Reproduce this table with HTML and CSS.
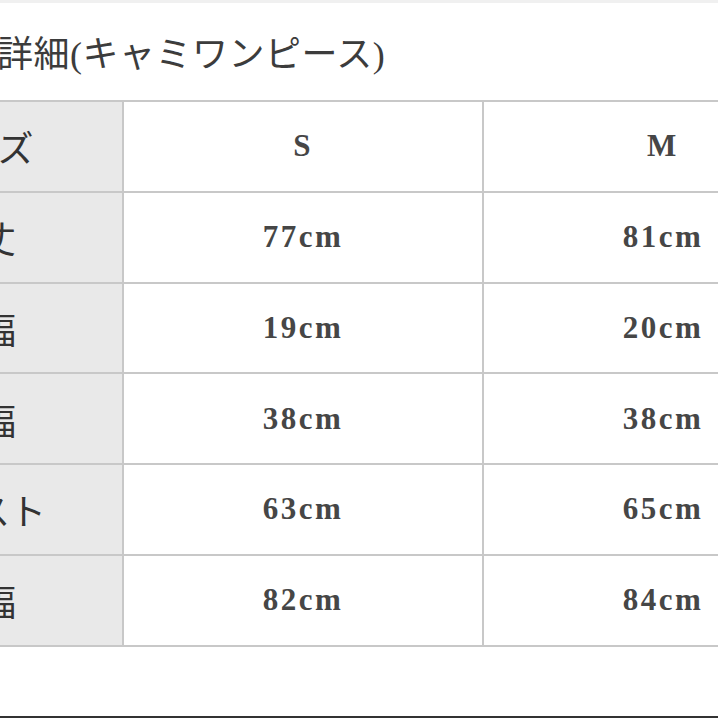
FILE: index.html
```html
<!DOCTYPE html>
<html lang="ja">
<head>
<meta charset="utf-8">
<title>詳細(キャミワンピース)</title>
<link rel="stylesheet" href="styles.css">
</head>
<body>
<div class="page">
  <div class="topband"></div>
  <h1 class="title">詳細(キャミワンピース)</h1>
  <div class="sizes">
    <div class="cell label">サイズ</div>
    <div class="cell head">S</div>
    <div class="cell head">M</div>

    <div class="cell label">着丈</div>
    <div class="cell val">77cm</div>
    <div class="cell val">81cm</div>

    <div class="cell label">肩幅</div>
    <div class="cell val">19cm</div>
    <div class="cell val">20cm</div>

    <div class="cell label">身幅</div>
    <div class="cell val">38cm</div>
    <div class="cell val">38cm</div>

    <div class="cell label label--shift">バスト</div>
    <div class="cell val">63cm</div>
    <div class="cell val">65cm</div>

    <div class="cell label">裾幅</div>
    <div class="cell val">82cm</div>
    <div class="cell val">84cm</div>
  </div>
  <div class="spacer"></div>
  <div class="bottombar"></div>
</div>
</body>
</html>
```
FILE: styles.css
```css
* { box-sizing: border-box; }
html, body {
  margin: 0;
  padding: 0;
  background: #ffffff;
}
.page {
  width: 718px;
  height: 718px;
  overflow: hidden;
  display: flex;
  flex-direction: column;
  background: #ffffff;
}
.topband {
  height: 3px;
  flex: none;
  background: #f0f0f0;
}
.title {
  flex: none;
  margin: 0 0 0 -3px;
  padding-top: 32px;
  height: 97px;
  font-family: "Liberation Serif", "Noto Sans CJK JP", serif;
  font-weight: 400;
  font-size: 36px;
  line-height: 40px;
  letter-spacing: 0.5px;
  color: #3c3c3c;
  white-space: nowrap;
}
.sizes {
  flex: none;
  display: grid;
  grid-template-columns: 286px 360px 360px;
  grid-auto-rows: 90.75px;
  width: 1006px;
  margin-left: -162px;
  border-top: 2px solid #c8c8c8;
}
.cell {
  display: flex;
  align-items: center;
  justify-content: center;
  border-right: 2px solid #c8c8c8;
  border-bottom: 2px solid #c8c8c8;
  white-space: nowrap;
}
.label {
  background: #e9e9e9;
  font-family: "Noto Sans CJK JP", sans-serif;
  font-size: 36px;
  color: #333333;
}
.label--shift {
  padding-left: 24px;
}
.head, .val {
  font-family: "Liberation Serif", serif;
  font-weight: 700;
  font-size: 31px;
  letter-spacing: 2.5px;
  color: #464646;
}
.spacer {
  flex: 1;
}
.bottombar {
  flex: none;
  height: 2px;
  background: #333333;
}
```
